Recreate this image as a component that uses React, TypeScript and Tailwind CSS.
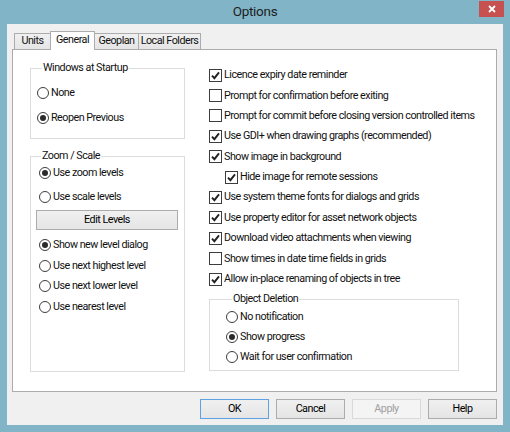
import React from 'react';
import clsx from 'clsx';

const font = { fontFamily: 'Roboto, "Noto Sans", "Liberation Sans", sans-serif' };

function Radio({ label, checked }: { label: string; checked?: boolean }) {
  return (
    <div className="flex items-center h-full">
      <span className="w-[12px] h-[12px] rounded-full border border-[#3c3c3c] bg-white flex items-center justify-center shrink-0">
        {checked && <span className="w-[6px] h-[6px] rounded-full bg-[#2b2b2b]" />}
      </span>
      <span className="ml-[2px] whitespace-nowrap">{label}</span>
    </div>
  );
}

function Check({ label, checked }: { label: string; checked?: boolean }) {
  return (
    <div className="flex items-center h-full">
      <span className="w-[13px] h-[13px] border border-[#3c3c3c] bg-white flex items-center justify-center shrink-0">
        {checked && (
          <svg width="11" height="11" viewBox="0 0 11 11">
            <path d="M2 5.6 L4.4 8.2 L9 2.4" fill="none" stroke="#222" strokeWidth="1.9" />
          </svg>
        )}
      </span>
      <span className="ml-[2px] whitespace-nowrap">{label}</span>
    </div>
  );
}

function Button({ label, primary, disabled, className }: { label: string; primary?: boolean; disabled?: boolean; className?: string }) {
  return (
    <div
      className={clsx(
        'h-[20px] flex items-center justify-center border',
        primary && 'border-[#5fa2e3] bg-gradient-to-b from-[#f0f0f0] to-[#e5e5e5] text-black',
        disabled && 'border-[#d9d9d9] bg-[#f4f4f4] text-[#a0a0a0]',
        !primary && !disabled && 'border-[#acacac] bg-gradient-to-b from-[#f0f0f0] to-[#e5e5e5] text-black',
        className
      )}
    >
      {label}
    </div>
  );
}

const checks: { label: string; checked: boolean; indent?: boolean }[] = [
  { label: 'Licence expiry date reminder', checked: true },
  { label: 'Prompt for confirmation before exiting', checked: false },
  { label: 'Prompt for commit before closing version controlled items', checked: false },
  { label: 'Use GDI+ when drawing graphs (recommended)', checked: true },
  { label: 'Show image in background', checked: true },
  { label: 'Hide image for remote sessions', checked: true, indent: true },
  { label: 'Use system theme fonts for dialogs and grids', checked: true },
  { label: 'Use property editor for asset network objects', checked: true },
  { label: 'Download video attachments when viewing', checked: true },
  { label: 'Show times in date time fields in grids', checked: false },
  { label: 'Allow in-place renaming of objects in tree', checked: true },
];

export default function App() {
  return (
    <div className="w-[510px] h-[432px] bg-[#80b4c6] flex flex-col text-[10.75px] tracking-[-0.5px] text-[#111]" style={font}>
      {/* Title bar */}
      <div className="h-[24px] relative flex items-center justify-center shrink-0">
        <span className="text-[13.5px] tracking-[-0.3px] text-[#1e1e1e] -mt-[1px]">Options</span>
        <div className="absolute right-[6px] top-[1px] w-[25px] h-[16px] bg-[#c75050] flex items-center justify-center">
          <svg width="8" height="8" viewBox="0 0 8 8">
            <path d="M1 1 L7 7 M7 1 L1 7" stroke="white" strokeWidth="1.8" />
          </svg>
        </div>
      </div>

      {/* Client area */}
      <div className="flex-1 mx-[7px] mb-[7px] bg-[#f0f0f0] flex flex-col pl-[5px] pr-[6px] pt-[7px]">
        {/* Tabs */}
        <div className="flex items-end h-[18px] pl-[2px] relative z-10 whitespace-nowrap">
          <div className="w-[37px] h-[16px] border border-b-0 border-[#acacac] bg-gradient-to-b from-[#f0f0f0] to-[#e5e5e5] flex items-center justify-center">
            Units
          </div>
          <div className="w-[45px] h-[19px] -mb-px -ml-px border border-b-0 border-[#acacac] bg-white flex items-center justify-center pb-[2px]">
            General
          </div>
          <div className="w-[45px] h-[16px] -ml-px border border-b-0 border-[#acacac] bg-gradient-to-b from-[#f0f0f0] to-[#e5e5e5] flex items-center justify-center">
            Geoplan
          </div>
          <div className="w-[63px] h-[16px] -ml-px border border-b-0 border-[#acacac] bg-gradient-to-b from-[#f0f0f0] to-[#e5e5e5] flex items-center justify-center">
            Local Folders
          </div>
        </div>

        {/* Panel */}
        <div className="h-[343px] border border-[#acacac] bg-white flex pl-[17px]">
          {/* Left column */}
          <div className="w-[155px] shrink-0 flex flex-col">
            <fieldset className="mt-[11px] border border-[#dcdcdc] pt-[8px] pb-[10px] pl-[6px]">
              <legend className="ml-[5px] px-[1px] leading-[14px]">Windows at Startup</legend>
              <div className="h-[20px]"><Radio label="None" /></div>
              <div className="h-[20px] mt-[5px]"><Radio label="Reopen Previous" checked /></div>
            </fieldset>

            <fieldset className="mt-[10px] border border-[#dcdcdc] pb-[54px] pl-[5px] pr-[6px]">
              <legend className="ml-[5px] px-[1px] leading-[14px]">Zoom / Scale</legend>
              <div className="h-[20px] pl-[3px]"><Radio label="Use zoom levels" checked /></div>
              <div className="h-[20px] mt-[4px] pl-[3px]"><Radio label="Use scale levels" /></div>
              <Button label="Edit Levels" className="mt-[3px]" />
              <div className="h-[20.5px] mt-[5px] pl-[3px]"><Radio label="Show new level dialog" checked /></div>
              <div className="h-[20.5px] pl-[3px]"><Radio label="Use next highest level" /></div>
              <div className="h-[20.5px] pl-[3px]"><Radio label="Use next lower level" /></div>
              <div className="h-[20.5px] pl-[3px]"><Radio label="Use nearest level" /></div>
            </fieldset>
          </div>

          {/* Right column */}
          <div className="ml-[24px] pt-[15px] flex flex-col">
            {checks.map((c) => (
              <div key={c.label} className={clsx('h-[20.4px]', c.indent && 'ml-[16px]')}>
                <Check label={c.label} checked={c.checked} />
              </div>
            ))}
            <fieldset className="mt-[3px] w-[250px] border border-[#dcdcdc] pt-[1px] pb-[3px] pl-[16px]">
              <legend className="ml-[6px] px-[1px] leading-[14px]">Object Deletion</legend>
              <div className="h-[20px]"><Radio label="No notification" /></div>
              <div className="h-[20px]"><Radio label="Show progress" checked /></div>
              <div className="h-[20px]"><Radio label="Wait for user confirmation" /></div>
            </fieldset>
          </div>
        </div>

        {/* Buttons */}
        <div className="flex justify-end gap-[7px] mt-[7px]">
          <Button label="OK" primary className="w-[69px]" />
          <Button label="Cancel" className="w-[69px]" />
          <Button label="Apply" disabled className="w-[69px]" />
          <Button label="Help" className="w-[69px]" />
        </div>
      </div>
    </div>
  );
}
